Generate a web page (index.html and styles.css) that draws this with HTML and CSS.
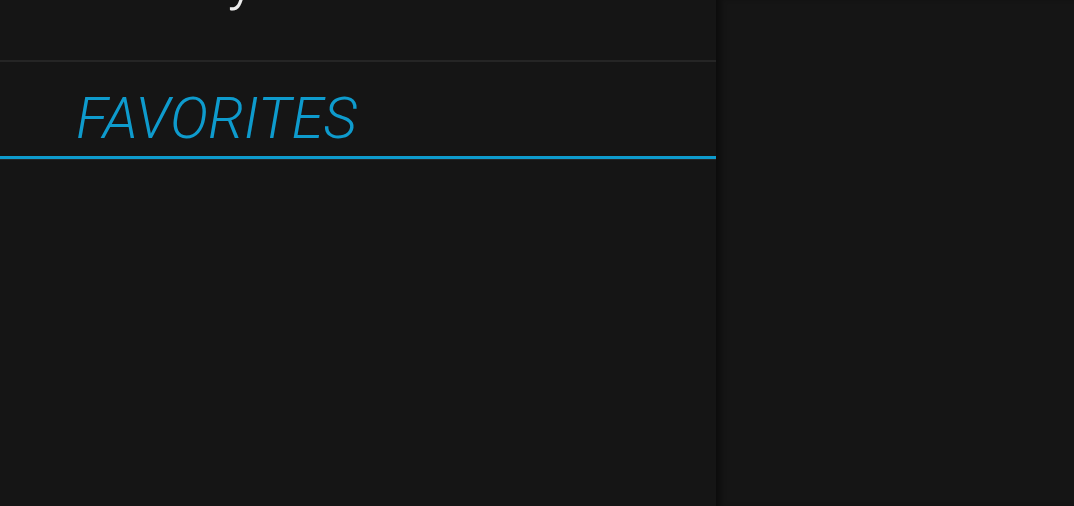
FILE: index.html
```html
<!DOCTYPE html>
<html lang="en">
<head>
    <meta charset="UTF-8">
    <meta name="viewport" content="width=device-width, initial-scale=1.0">
    <title>Library</title>
    <link rel="stylesheet" href="styles.css">
</head>
<body>
    <div class="main">
        <header class="top">
            <h1>Library</h1>
        </header>

        <div class="tabs">
            <h2 class="tab active">FAVORITES</h2>
        </div>

        <div class="list">
            <!-- favorites go here -->
        </div>
    </div>

    <aside class="side"></aside>
</body>
</html>
```

FILE: styles.css
```css
body {
    font-family: Roboto, 'Noto Sans', sans-serif;
    margin: 0;
    padding: 0;
    background: #151515;
    color: #e8e8e8;
    display: flex;
    height: 506px;
    overflow: hidden;
}
.main {
    width: 716px;
    flex-shrink: 0;
    display: flex;
    flex-direction: column;
}
.top {
    height: 60px;
    overflow: hidden;
    border-bottom: 2px solid #252525;
}
.top h1 {
    margin: -52px 0 0;
    padding-left: 77px;
    font-size: 60px;
    line-height: 60px;
    font-weight: 300;
    color: #ececec;
}
.tabs {
    border-bottom: 1px solid #262626;
}
.tab {
    margin: 0;
    padding: 19px 0 0 76px;
    font-size: 58px;
    line-height: 75px;
    font-weight: 300;
    font-style: italic;
    color: #0e9bcd;
    border-bottom: 3px solid #0e9bcd;
}
.list {
    flex: 1;
}
.side {
    flex: 1;
    background: #151515;
    box-shadow: inset 7px 0 6px -3px rgba(0, 0, 0, 0.45);
}
```
